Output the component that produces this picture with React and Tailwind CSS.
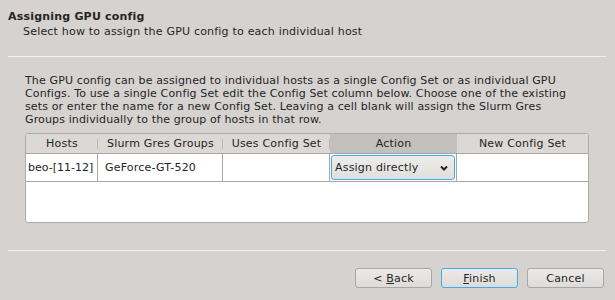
import React from "react";

const font = { fontFamily: '"DejaVu Sans", "Liberation Sans", sans-serif' };

function Chevron() {
  return (
    <svg width="8" height="6" viewBox="0 0 8 6" className="shrink-0">
      <path d="M1 1.5 L4 4.5 L7 1.5" fill="none" stroke="#232627" strokeWidth="2" />
    </svg>
  );
}

function HeadCell({ w, label, active, last }) {
  return (
    <div
      className={`relative flex items-center justify-center h-full ${w} ${
        active ? "bg-[#c4c0bd]" : ""
      } ${last ? "flex-1" : ""}`}
    >
      <span>{label}</span>
      {!last && !active && (
        <span className="absolute right-0 top-[5px] h-[10px] w-px bg-[#bdb9b6]" />
      )}
    </div>
  );
}

function Button({ children, primary }) {
  return (
    <button
      className={`w-[77px] h-[20px] rounded-[3px] border bg-gradient-to-b from-[#eceae8] to-[#dedbd9] text-[11px] tracking-[0.2px] text-[#232627] leading-none ${
        primary ? "border-[#3daee9]" : "border-[#a9a6a3]"
      }`}
    >
      {children}
    </button>
  );
}

export default function App() {
  return (
    <div
      className="w-[615px] h-[300px] bg-[#d6d2d0] text-[#232627] text-[11px] tracking-[0.2px] leading-[13px] flex flex-col overflow-hidden"
      style={font}
    >
      {/* page title */}
      <div className="h-[56px] pt-[10px]">
        <div className="pl-[8px] font-bold">Assigning GPU config</div>
        <div className="pl-[23px] mt-[2px]">
          Select how to assign the GPU config to each individual host
        </div>
      </div>
      <div className="ml-[8px] mr-[9px] h-px bg-[#f2f0ee]" />

      {/* explanation */}
      <div className="ml-[25px] mt-[17px] whitespace-nowrap tracking-[0.13px]">
        The GPU config can be assigned to individual hosts as a single Config Set or as individual GPU
        <br />
        Configs. To use a single Config Set edit the Config Set column below. Choose one of the existing
        <br />
        sets or enter the name for a new Config Set. Leaving a cell blank will assign the Slurm Gres
        <br />
        Groups individually to the group of hosts in that row.
      </div>

      {/* table */}
      <div className="ml-[25px] mt-[7px] w-[564px] h-[90px] border border-[#aeaaa7] rounded-[3px] bg-white flex flex-col overflow-hidden">
        <div className="h-[19px] bg-[#dcd8d5] flex shrink-0">
          <HeadCell w="w-[72px]" label="Hosts" />
          <HeadCell w="w-[125px]" label="Slurm Gres Groups" />
          <HeadCell w="w-[107px]" label="Uses Config Set" />
          <HeadCell w="w-[127px]" label="Action" active />
          <HeadCell label="New Config Set" last />
        </div>
        <div className="h-[29px] flex border-y border-[#aaa6a3] shrink-0">
          <div className="w-[72px] border-r border-[#aaa6a3] flex items-center pl-[2px] whitespace-nowrap tracking-normal">
            beo-[11-12]
          </div>
          <div className="w-[125px] border-r border-[#aaa6a3] flex items-center pl-[7px]">
            GeForce-GT-520
          </div>
          <div className="w-[107px] border-r border-[#aaa6a3]" />
          <div className="w-[127px] border-r border-[#aaa6a3] p-px">
            <div className="h-full rounded-[3px] border border-[#3daee9] bg-gradient-to-b from-[#efedeb] to-[#e1dfdd] flex items-center justify-between pl-[3px] pr-[6px]">
              <span>Assign directly</span>
              <Chevron />
            </div>
          </div>
          <div className="flex-1" />
        </div>
        <div className="flex-1" />
      </div>

      <div className="ml-[8px] mr-[9px] mt-[27px] h-px bg-[#f2f0ee]" />

      {/* buttons */}
      <div className="mt-[17px] flex justify-end gap-[9px] pr-[11px]">
        <Button>
          &lt; <span className="underline">B</span>ack
        </Button>
        <Button primary>
          <span className="underline">F</span>inish
        </Button>
        <Button>Cancel</Button>
      </div>
    </div>
  );
}
